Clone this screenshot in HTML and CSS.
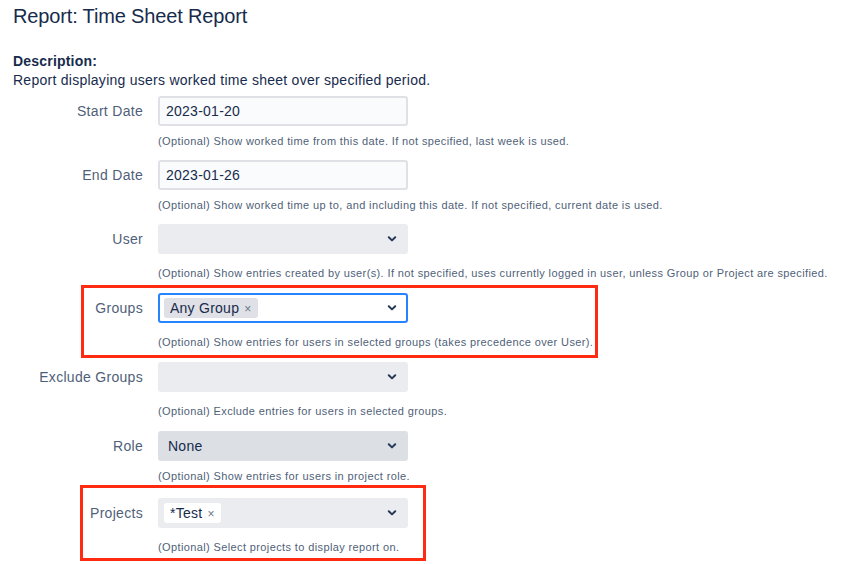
FILE: index.html
```html
<!DOCTYPE html>
<html>
<head>
<meta charset="utf-8">
<link rel="stylesheet" href="styles.css">
</head>
<body>
<div class="page">
  <h1 class="title">Report: Time Sheet Report</h1>
  <div class="desc">
    <div class="desc-label">Description:</div>
    <div class="desc-text">Report displaying users worked time sheet over specified period.</div>
  </div>
  <div class="form">
    <div class="row r-start">
      <label class="label">Start Date</label>
      <div class="field">
        <div class="input text-input">2023-01-20</div>
        <div class="help h-tight">(Optional) Show worked time from this date. If not specified, last week is used.</div>
      </div>
    </div>
    <div class="row r-end">
      <label class="label">End Date</label>
      <div class="field">
        <div class="input text-input">2023-01-26</div>
        <div class="help h-tight">(Optional) Show worked time up to, and including this date. If not specified, current date is used.</div>
      </div>
    </div>
    <div class="row r-user">
      <label class="label">User</label>
      <div class="field">
        <div class="input select"><span class="chev"><svg width="10" height="6" viewBox="0 0 10 6"><path d="M1.8 1.3 L5 4.4 L8.2 1.3" fill="none" stroke="#253858" stroke-width="2" stroke-linecap="round" stroke-linejoin="round"/></svg></span></div>
        <div class="help h-loose">(Optional) Show entries created by user(s). If not specified, uses currently logged in user, unless Group or Project are specified.</div>
      </div>
    </div>
    <div class="row r-groups">
      <label class="label">Groups</label>
      <div class="field">
        <div class="input select focused"><span class="tag tag-grey">Any Group <span class="x">×</span></span><span class="chev"><svg width="10" height="6" viewBox="0 0 10 6"><path d="M1.8 1.3 L5 4.4 L8.2 1.3" fill="none" stroke="#253858" stroke-width="2" stroke-linecap="round" stroke-linejoin="round"/></svg></span></div>
        <div class="help h-loose">(Optional) Show entries for users in selected groups (takes precedence over User).</div>
      </div>
    </div>
    <div class="row r-excl">
      <label class="label">Exclude Groups</label>
      <div class="field">
        <div class="input select"><span class="chev"><svg width="10" height="6" viewBox="0 0 10 6"><path d="M1.8 1.3 L5 4.4 L8.2 1.3" fill="none" stroke="#253858" stroke-width="2" stroke-linecap="round" stroke-linejoin="round"/></svg></span></div>
        <div class="help h-loose">(Optional) Exclude entries for users in selected groups.</div>
      </div>
    </div>
    <div class="row r-role">
      <label class="label">Role</label>
      <div class="field">
        <div class="input select dark"><span class="val">None</span><span class="chev"><svg width="10" height="6" viewBox="0 0 10 6"><path d="M1.8 1.3 L5 4.4 L8.2 1.3" fill="none" stroke="#253858" stroke-width="2" stroke-linecap="round" stroke-linejoin="round"/></svg></span></div>
        <div class="help h-tight">(Optional) Show entries for users in project role.</div>
      </div>
    </div>
    <div class="row r-proj">
      <label class="label">Projects</label>
      <div class="field">
        <div class="input select"><span class="tag tag-white">*Test <span class="x">×</span></span><span class="chev"><svg width="10" height="6" viewBox="0 0 10 6"><path d="M1.8 1.3 L5 4.4 L8.2 1.3" fill="none" stroke="#253858" stroke-width="2" stroke-linecap="round" stroke-linejoin="round"/></svg></span></div>
        <div class="help h-loose">(Optional) Select projects to display report on.</div>
      </div>
    </div>
  </div>
  <div class="mark mark-1"></div>
  <div class="mark mark-2"></div>
</div>
</body>
</html>
```
FILE: styles.css
```css
* { box-sizing: border-box; }
html, body { margin: 0; padding: 0; background: #fff; }
body {
  font-family: "Liberation Sans", Arial, sans-serif;
  color: #172b4d;
  width: 868px;
  height: 564px;
  overflow: hidden;
}
.page {
  position: relative;
  padding: 4px 0 0 13px;
}
.title {
  margin: 0;
  font-size: 20px;
  line-height: 24px;
  font-weight: 400;
  letter-spacing: -0.15px;
  color: #172b4d;
}
.desc {
  margin-top: 24px;
  font-size: 14px;
  line-height: 19px;
  letter-spacing: 0.26px;
}
.desc-label { font-weight: 700; letter-spacing: 0.2px; }
.form {
  margin-top: 6px;
  display: flex;
  flex-direction: column;
}
.row {
  display: grid;
  grid-template-columns: 130px 250px;
  column-gap: 15px;
  align-items: start;
}
.label {
  font-size: 14px;
  line-height: 30px;
  height: 30px;
  text-align: right;
  color: #505f79;
  letter-spacing: 0.3px;
  white-space: nowrap;
}
.field { display: flex; flex-direction: column; }
.input {
  height: 30px;
  width: 250px;
  border-radius: 3px;
  font-size: 14px;
  letter-spacing: 0.25px;
  display: flex;
  align-items: center;
  position: relative;
}
.text-input {
  background: #fafbfc;
  border: 2px solid #dfe1e6;
  padding-left: 6px;
  color: #172b4d;
}
.select {
  background: #ebecf0;
  border: 2px solid #ebecf0;
  padding-left: 4px;
}
.select.dark {
  background: #dcdfe4;
  border-color: #dcdfe4;
  padding-left: 8px;
}
.select.focused {
  background: #fff;
  border-color: #2684ff;
}
.chev {
  position: absolute;
  right: 9px;
  top: 10px;
  width: 10px;
  height: 6px;
  display: flex;
}
.val { color: #172b4d; }
.tag {
  height: 20px;
  line-height: 20px;
  border-radius: 3px;
  padding: 0 6px 0 6px;
  font-size: 14px;
  color: #172b4d;
  white-space: nowrap;
}
.tag-grey { background: #dfe1e6; }
.tag-white { background: #fff; }
.x { color: #6b778c; font-size: 12px; margin-left: 1px; }
.help {
  font-size: 11px;
  line-height: 16px;
  color: #505f79;
  letter-spacing: 0.38px;
  white-space: nowrap;
}
.h-tight { margin-top: 7px; }
.h-loose { margin-top: 11px; }
.r-end { margin-top: 11px; }
.r-user { margin-top: 11px; }
.r-groups { margin-top: 12px; }
.r-excl { margin-top: 12px; }
.r-role { margin-top: 12px; }
.r-proj { margin-top: 14px; }
.mark {
  position: absolute;
  border: 3px solid #ff2a12;
}
.mark-1 { left: 81px; top: 285px; width: 517px; height: 73px; }
.mark-2 { left: 80px; top: 485px; width: 346px; height: 76px; }
```
